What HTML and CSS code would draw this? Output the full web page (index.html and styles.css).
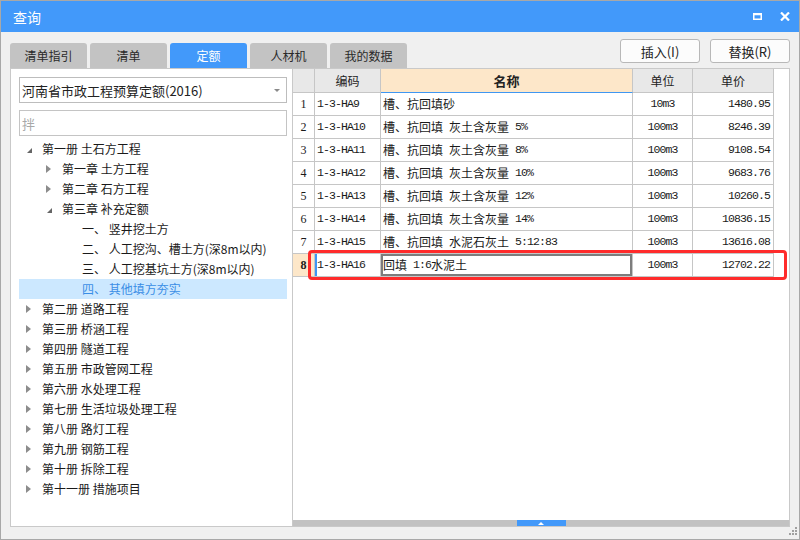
FILE: index.html
```html
<!DOCTYPE html>
<html lang="zh">
<head>
<meta charset="utf-8">
<title>查询</title>
<link rel="stylesheet" href="styles.css">
</head>
<body>
<div class="window">
  <div class="titlebar">
    <span class="title">查询</span>
    <div class="winctl">
      <svg class="ic-max" width="9" height="7" viewBox="0 0 9 7"><path d="M0 0h9v7H0z M1.5 2.2v3.3h6V2.2z" fill="#fff" fill-rule="evenodd"/></svg>
      <svg class="ic-close" width="10" height="9" viewBox="0 0 10 9"><path d="M1 0.5L9 8.5M9 0.5L1 8.5" stroke="#fff" stroke-width="2.2"/></svg>
    </div>
  </div>

  <div class="toolbar">
    <div class="tabs">
      <div class="tab">清单指引</div>
      <div class="tab">清单</div>
      <div class="tab active">定额</div>
      <div class="tab">人材机</div>
      <div class="tab">我的数据</div>
    </div>
    <div class="actions">
      <button class="btn">插入(I)</button>
      <button class="btn">替换(R)</button>
    </div>
  </div>

  <div class="main">
    <div class="left">
      <div class="select"><span>河南省市政工程预算定额(2016)</span><span class="caret"></span></div>
      <div class="search">拌</div>
      <div class="tree">
        <div class="row l1"><span class="tg open"></span>第一册 土石方工程</div>
        <div class="row l2"><span class="tg closed"></span>第一章 土方工程</div>
        <div class="row l2"><span class="tg closed"></span>第二章 石方工程</div>
        <div class="row l2"><span class="tg open"></span>第三章 补充定额</div>
        <div class="row l3"><span class="tg"></span>一、 竖井挖土方</div>
        <div class="row l3"><span class="tg"></span>二、 人工挖沟、槽土方(深8m以内)</div>
        <div class="row l3"><span class="tg"></span>三、 人工挖基坑土方(深8m以内)</div>
        <div class="row l3 sel"><span class="tg"></span>四、 其他填方夯实</div>
        <div class="row l1"><span class="tg closed"></span>第二册 道路工程</div>
        <div class="row l1"><span class="tg closed"></span>第三册 桥涵工程</div>
        <div class="row l1"><span class="tg closed"></span>第四册 隧道工程</div>
        <div class="row l1"><span class="tg closed"></span>第五册 市政管网工程</div>
        <div class="row l1"><span class="tg closed"></span>第六册 水处理工程</div>
        <div class="row l1"><span class="tg closed"></span>第七册 生活垃圾处理工程</div>
        <div class="row l1"><span class="tg closed"></span>第八册 路灯工程</div>
        <div class="row l1"><span class="tg closed"></span>第九册 钢筋工程</div>
        <div class="row l1"><span class="tg closed"></span>第十册 拆除工程</div>
        <div class="row l1"><span class="tg closed"></span>第十一册 措施项目</div>
      </div>
    </div>

    <div class="right">
      <div class="grid">
        <div class="tr head">
          <div class="td th"></div>
          <div class="td th c">编码</div>
          <div class="td th c name-h">名称</div>
          <div class="td th c">单位</div>
          <div class="td th c">单价</div>
        </div>
        <div class="tr">
          <div class="td num mono">1</div>
          <div class="td mono">1-3-HA9</div>
          <div class="td name">槽、抗回填砂</div>
          <div class="td mono c">10m3</div>
          <div class="td mono r">1480.95</div>
        </div>
        <div class="tr">
          <div class="td num mono">2</div>
          <div class="td mono">1-3-HA10</div>
          <div class="td name">槽、抗回填<span class="en"> </span>灰土含灰量<span class="en"> 5%</span></div>
          <div class="td mono c">100m3</div>
          <div class="td mono r">8246.39</div>
        </div>
        <div class="tr">
          <div class="td num mono">3</div>
          <div class="td mono">1-3-HA11</div>
          <div class="td name">槽、抗回填<span class="en"> </span>灰土含灰量<span class="en"> 8%</span></div>
          <div class="td mono c">100m3</div>
          <div class="td mono r">9108.54</div>
        </div>
        <div class="tr">
          <div class="td num mono">4</div>
          <div class="td mono">1-3-HA12</div>
          <div class="td name">槽、抗回填<span class="en"> </span>灰土含灰量<span class="en"> 10%</span></div>
          <div class="td mono c">100m3</div>
          <div class="td mono r">9683.76</div>
        </div>
        <div class="tr">
          <div class="td num mono">5</div>
          <div class="td mono">1-3-HA13</div>
          <div class="td name">槽、抗回填<span class="en"> </span>灰土含灰量<span class="en"> 12%</span></div>
          <div class="td mono c">100m3</div>
          <div class="td mono r">10260.5</div>
        </div>
        <div class="tr">
          <div class="td num mono">6</div>
          <div class="td mono">1-3-HA14</div>
          <div class="td name">槽、抗回填<span class="en"> </span>灰土含灰量<span class="en"> 14%</span></div>
          <div class="td mono c">100m3</div>
          <div class="td mono r">10836.15</div>
        </div>
        <div class="tr">
          <div class="td num mono">7</div>
          <div class="td mono">1-3-HA15</div>
          <div class="td name">槽、抗回填<span class="en"> </span>水泥石灰土<span class="en"> 5:12:83</span></div>
          <div class="td mono c">100m3</div>
          <div class="td mono r">13616.08</div>
        </div>
        <div class="tr current">
          <div class="td num mono">8</div>
          <div class="td mono code-cur">1-3-HA16</div>
          <div class="td name edit">回填<span class="en"> 1:6</span>水泥土</div>
          <div class="td mono c">100m3</div>
          <div class="td mono r">12702.22</div>
        </div>
      </div>
      <div class="mark"></div>
      <div class="hbar"><div class="handle"><span class="up"></span></div></div>
    </div>
  </div>

  <div class="status">
    <svg width="8" height="8" viewBox="0 0 8 8"><g fill="#a0a0a0"><rect x="6" y="0" width="2" height="2"/><rect x="3" y="3" width="2" height="2"/><rect x="6" y="3" width="2" height="2"/><rect x="0" y="6" width="2" height="2"/><rect x="3" y="6" width="2" height="2"/><rect x="6" y="6" width="2" height="2"/></g></svg>
  </div>
</div>
</body>
</html>
```

FILE: styles.css
```css
* { box-sizing: border-box; }

body {
  margin: 0;
  font-family: "Noto Sans CJK SC", "Microsoft YaHei", sans-serif;
  color: #1e1e1e;
}

.window {
  width: 800px;
  height: 540px;
  border: 1px solid #a8a8a8;
  background: #f0f0f0;
  display: flex;
  flex-direction: column;
}

.titlebar {
  height: 31px;
  flex: none;
  background: #4299fa;
  color: #fff;
  display: flex;
  align-items: center;
  padding: 0 9px 0 12px;
}
.title { flex: 1; font-size: 14px; line-height: 16px; }
.winctl { display: flex; align-items: center; gap: 18px; }
.ic-max { margin-top: -1px; }

.toolbar {
  height: 36px;
  flex: none;
  display: flex;
  padding: 0 9px 0 9px;
}
.tabs { display: flex; gap: 3px; align-self: flex-end; }
.tab {
  width: 77px;
  height: 25px;
  background: #c3c3c3;
  border-radius: 3px 3px 0 0;
  font-size: 12px;
  line-height: 14px;
  color: #2a2a2a;
  display: flex;
  align-items: center;
  justify-content: center;
}
.tab.active { background: #4299fa; color: #fff; }

.actions { margin-left: auto; display: flex; gap: 10px; padding-top: 7px; }
.btn {
  width: 80px;
  height: 24px;
  border: 1px solid #b8b8b8;
  border-radius: 3px;
  background: #fcfcfc;
  font-family: "Noto Sans CJK SC", sans-serif;
  font-size: 13px;
  line-height: 15px;
  color: #222;
  padding: 0;
}

.main {
  height: 459px;
  flex: none;
  display: flex;
  padding: 0 9px;
}

.left {
  width: 283px;
  flex: none;
  background: #fff;
  border: 1px solid #c9c9c9;
  padding: 8px 5px 0 8px;
}
.select {
  height: 26px;
  border: 1px solid #bdbdbd;
  display: flex;
  align-items: center;
  padding-left: 2px;
  font-size: 13px;
  line-height: 15px;
  color: #222;
}
.caret {
  margin-left: auto;
  margin-right: 6px;
  width: 0;
  height: 0;
  border-top: 3px solid #8a8a8a;
  border-left: 3px solid transparent;
  border-right: 3px solid transparent;
}
.search {
  height: 26px;
  margin-top: 7px;
  margin-bottom: 3px;
  border: 1px solid #c4c4c4;
  padding-left: 2px;
  display: flex;
  align-items: center;
  font-size: 13px;
  line-height: 15px;
  color: #a8a8a8;
}

.row {
  height: 20px;
  display: flex;
  align-items: center;
  font-size: 12px;
  line-height: 14px;
  white-space: nowrap;
  color: #1a1a1a;
}
.l2 { padding-left: 20px; }
.l3 { padding-left: 40px; }
.row.sel { background: #cce8ff; color: #3a8ee6; }
.tg { width: 23px; flex: none; height: 20px; display: flex; align-items: center; }
.tg.closed::before {
  content: "";
  margin-left: 7px;
  width: 0;
  height: 0;
  border-left: 5px solid #8c8c8c;
  border-top: 4px solid transparent;
  border-bottom: 4px solid transparent;
}
.tg.open::before {
  content: "";
  margin-left: 8px;
  margin-top: 2px;
  width: 0;
  height: 0;
  border-bottom: 5px solid #666;
  border-left: 5px solid transparent;
}

.right {
  flex: 1;
  background: #fff;
  border: 1px solid #c9c9c9;
  border-left: none;
  display: flex;
  flex-direction: column;
  position: relative;
}

.tr {
  display: grid;
  grid-template-columns: 22px 66px 252px 60px 81px;
}
.td {
  height: 23px;
  border-right: 1px solid #c6c6c6;
  border-bottom: 1px solid #c6c6c6;
  display: flex;
  align-items: center;
  padding: 0 2px;
  font-size: 12px;
  line-height: 14px;
  color: #1a1a1a;
  white-space: nowrap;
  overflow: hidden;
}
.th {
  height: 24px;
  background: #e8e8e8;
  font-size: 12px;
  color: #222;
}
.name-h {
  background: #fde7c9;
  font-weight: bold;
  font-size: 13px;
  border-bottom-color: #3f97f2;
}
.c { justify-content: center; }
.r { justify-content: flex-end; padding-right: 3px; }
.mono, .en {
  font-family: "Liberation Mono", "DejaVu Sans Mono", monospace;
  font-size: 11.5px;
  letter-spacing: -0.9px;
  white-space: pre;
}
.num { justify-content: center; font-family: "Liberation Serif", serif; font-size: 12px; letter-spacing: 0; }
.current .num { background: #fde7c9; font-weight: bold; }
.code-cur { box-shadow: inset 2px 0 0 #3d95f5; }
.edit { box-shadow: inset 0 0 0 2px #7d7d7d; }

.mark {
  position: absolute;
  left: 15px;
  top: 181px;
  width: 479px;
  height: 30px;
  border: 3px solid #ff2b2b;
  border-radius: 4px;
}

.hbar {
  margin-top: auto;
  height: 6px;
  background: #c2c2c2;
  display: flex;
  justify-content: center;
}
.handle {
  width: 49px;
  height: 6px;
  background: #4299fa;
  display: flex;
  justify-content: center;
  align-items: flex-end;
  padding-bottom: 1px;
}
.up {
  width: 0;
  height: 0;
  border-bottom: 3px solid #fff;
  border-left: 3px solid transparent;
  border-right: 3px solid transparent;
}

.status {
  flex: 1;
  display: flex;
  justify-content: flex-end;
  align-items: flex-start;
  padding-right: 2px;
}
```
